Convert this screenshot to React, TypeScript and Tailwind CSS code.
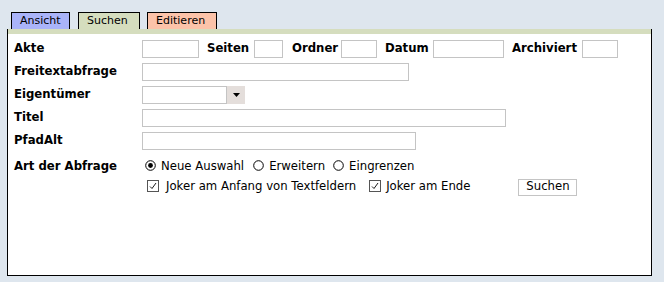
const font = "font-['DejaVu_Sans',sans-serif]";

function Field({ w, className = "" }: { w: string; className?: string }) {
  return <div className={`h-[18px] ${w} border border-[#c4c4c4] bg-white shrink-0 ${className}`} />;
}

function Radio({ checked }: { checked?: boolean }) {
  return (
    <svg width="11" height="11" viewBox="0 0 11 11" className="shrink-0">
      <circle cx="5.5" cy="5.5" r="4.8" fill="white" stroke="black" strokeWidth="1" />
      {checked && <circle cx="5.5" cy="5.5" r="2.4" fill="black" />}
    </svg>
  );
}

function Check() {
  return (
    <svg width="12" height="12" viewBox="0 0 12 12" className="shrink-0">
      <rect x="0.5" y="0.5" width="11" height="11" fill="white" stroke="#555" strokeWidth="1" />
      <polyline points="3,6.5 5,8.5 9,3" fill="none" stroke="black" strokeWidth="0.9" />
    </svg>
  );
}

function Row({ label, children, className = "h-[23px]" }: { label: string; children?: React.ReactNode; className?: string }) {
  return (
    <div className={`flex items-center ${className}`}>
      <div className="w-[128px] shrink-0 text-[11.7px] font-bold">{label}</div>
      {children}
    </div>
  );
}

export default function App() {
  return (
    <div className={`w-[664px] h-[282px] bg-[#dee6ee] pt-[12px] pl-[7px] text-black ${font}`}>
      {/* Tabs */}
      <div className="flex h-[17px] pl-[4px] text-[11px]">
        <div className="w-[59px] border border-b-0 border-black bg-[#aab4f9] pl-[8px] flex items-center">Ansicht</div>
        <div className="ml-[8px] w-[62px] border border-b-0 border-black bg-[#d5ddbe] pl-[8px] flex items-center">Suchen</div>
        <div className="ml-[7px] w-[70px] border border-b-0 border-black bg-[#fcc3a9] pl-[8px] flex items-center">Editieren</div>
      </div>

      {/* Panel */}
      <div className="w-[645px] h-[247px] border border-t-0 border-black bg-white">
        <div className="h-[5px] bg-[#d5ddbe]" />
        <div className="pl-[6px] pt-[3px]">
          <Row label="Akte">
            <Field w="w-[57px]" />
            <div className="ml-[8px] w-[47px] text-[11.7px] font-bold">Seiten</div>
            <Field w="w-[29px]" />
            <div className="ml-[9px] w-[49px] text-[11.7px] font-bold">Ordner</div>
            <Field w="w-[36px]" />
            <div className="ml-[8px] w-[48px] text-[11.7px] font-bold">Datum</div>
            <Field w="w-[71px]" />
            <div className="ml-[8px] w-[70px] text-[11.7px] font-bold">Archiviert</div>
            <Field w="w-[36px]" />
          </Row>
          <Row label="Freitextabfrage">
            <Field w="w-[267px]" />
          </Row>
          <Row label="Eigentümer">
            <div className="flex h-[18px]">
              <div className="w-[85px] border border-[#c4c4c4] bg-white" />
              <div className="w-[18px] bg-[#e4dedb] flex items-center justify-center">
                <svg width="7" height="4" viewBox="0 0 7 4">
                  <polygon points="0,0 7,0 3.5,4" fill="black" />
                </svg>
              </div>
            </div>
          </Row>
          <Row label="Titel">
            <Field w="w-[364px]" />
          </Row>
          <Row label="PfadAlt">
            <Field w="w-[274px]" />
          </Row>
          <Row label="Art der Abfrage" className="h-[26px] pt-[3px]">
            <div className="flex items-center text-[11.7px] pl-[3px]">
              <span className="-mt-[2px] flex"><Radio checked /></span>
              <span className="ml-[5px]">Neue Auswahl</span>
              <span className="ml-[9px] -mt-[2px] flex"><Radio /></span>
              <span className="ml-[5px]">Erweitern</span>
              <span className="ml-[8px] -mt-[2px] flex"><Radio /></span>
              <span className="ml-[5px]">Eingrenzen</span>
            </div>
          </Row>
          <div className="flex items-center h-[18px] pl-[133px] text-[11.7px]">
            <span className="-mt-[3px] flex"><Check /></span>
            <span className="ml-[7px]">Joker am Anfang von Textfeldern</span>
            <span className="ml-[13px] -mt-[3px] flex"><Check /></span>
            <span className="ml-[5px]">Joker am Ende</span>
            <div className="ml-[48px] w-[59px] h-[17px] border border-[#c4c4c4] bg-white flex items-center justify-center">Suchen</div>
          </div>
        </div>
      </div>
    </div>
  );
}
